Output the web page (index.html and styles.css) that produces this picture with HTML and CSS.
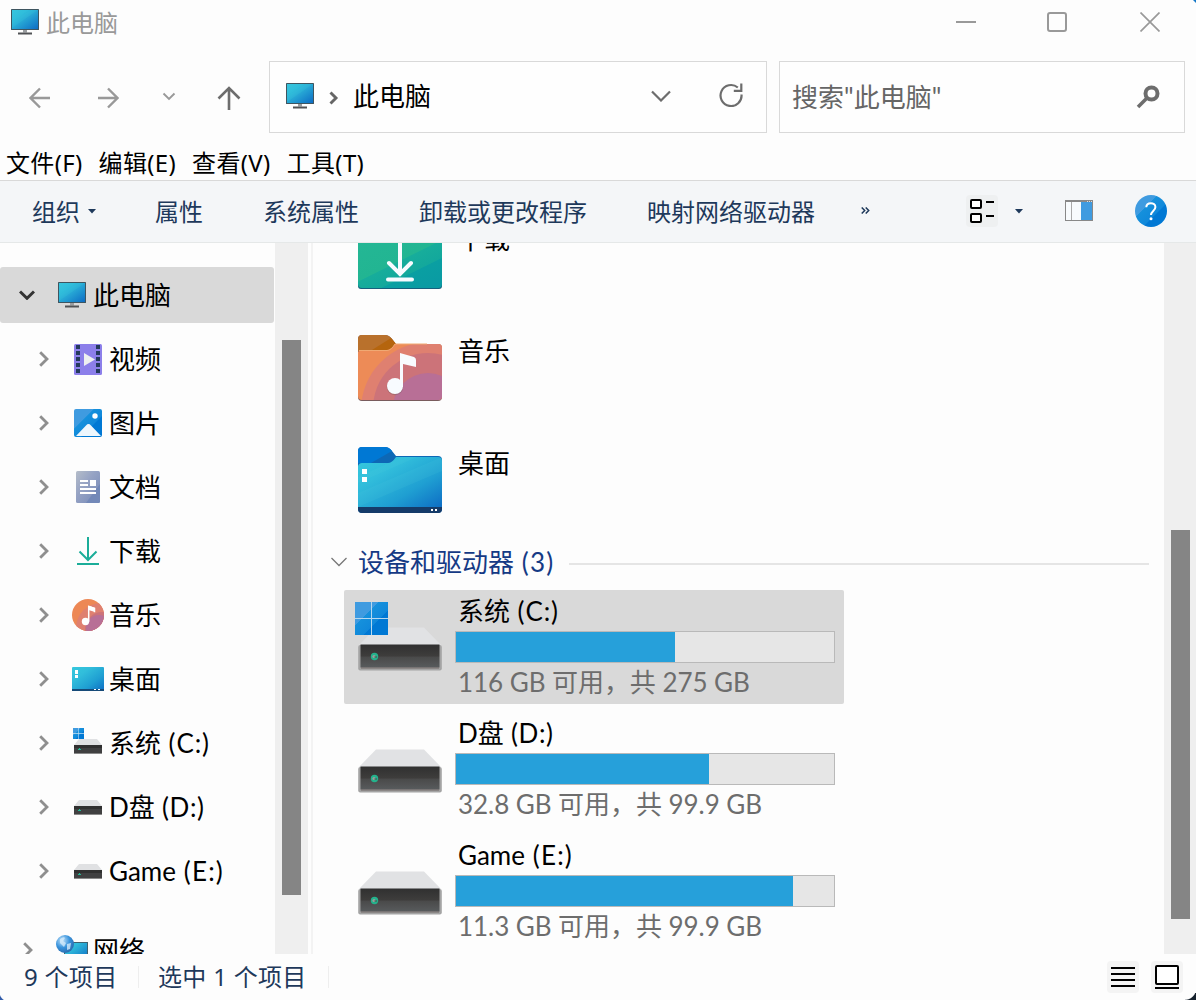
FILE: index.html
```
<!DOCTYPE html>
<html lang="zh-CN">
<head>
<meta charset="utf-8">
<title>此电脑</title>
<link rel="stylesheet" href="styles.css">
</head>
<body>
<svg class="defs" width="0" height="0" aria-hidden="true">
  <defs>
    <linearGradient id="gScreen" x1="0" y1="0" x2="1" y2="1"><stop offset="0" stop-color="#37c6dd"/><stop offset=".3" stop-color="#30bddb"/><stop offset="1" stop-color="#0d6cc4"/></linearGradient>
    <linearGradient id="gBlue" x1="0" y1="0" x2="1" y2="1"><stop offset="0" stop-color="#3f9be0"/><stop offset=".35" stop-color="#3f9be0"/><stop offset=".36" stop-color="#1590dc"/><stop offset=".62" stop-color="#1088da"/><stop offset=".63" stop-color="#0078d4"/><stop offset="1" stop-color="#0078d4"/></linearGradient>
    <linearGradient id="gTeal" x1="0" y1="0" x2=".8" y2="1"><stop offset="0" stop-color="#24b795"/><stop offset=".53" stop-color="#22b592"/><stop offset=".54" stop-color="#17ad9b"/><stop offset=".74" stop-color="#13a89c"/><stop offset=".75" stop-color="#0a9fa2"/><stop offset="1" stop-color="#0a9ba3"/></linearGradient>
    <linearGradient id="gDesk" x1="0" y1="0" x2="1" y2="1"><stop offset="0" stop-color="#35c8dd"/><stop offset=".3" stop-color="#31bddb"/><stop offset=".65" stop-color="#1f9fd2"/><stop offset="1" stop-color="#0d6cc4"/></linearGradient>
    <linearGradient id="gFront" x1="0" y1="0" x2="0" y2="1"><stop offset="0" stop-color="#303030"/><stop offset=".5" stop-color="#3e3d3c"/><stop offset=".55" stop-color="#4a4a4a"/><stop offset="1" stop-color="#585b5d"/></linearGradient>
    <linearGradient id="gDoc" x1="0" y1="0" x2="1" y2="1"><stop offset="0" stop-color="#b5bdc9"/><stop offset=".4" stop-color="#96a3c4"/><stop offset="1" stop-color="#7488b7"/></linearGradient>
    <radialGradient id="gGlobe" cx=".35" cy=".3" r=".8"><stop offset="0" stop-color="#c3e4fb"/><stop offset=".5" stop-color="#3993dc"/><stop offset="1" stop-color="#2863a5"/></radialGradient>
  </defs>
  <symbol id="pc" viewBox="0 0 28 26">
    <rect width="28" height="21" rx=".6" fill="#3e5560"/><rect x="1" y="1" width="26" height="19" fill="url(#gScreen)"/>
    <path d="M1 13 20 1h7L1 19z" fill="#36c5dd" opacity=".25"/><path d="M12 21h4v2.500h-4z" fill="#9a9da0"/><path d="M7 23.500h14v2H7z" fill="#505255"/>
  </symbol>
  <symbol id="right" viewBox="0 0 12 18"><path d="M2.200 2.200 9 9l-6.800 6.800" fill="none" stroke="#8f8f8f" stroke-width="2.800"/></symbol>
  <symbol id="drive" viewBox="0 0 84 46">
    <path d="M18 1.500h48L83 19H1z" fill="#e1e2e4"/><rect x=".2" y="19" width="83.600" height="25.500" rx="2" fill="#a4a4a4"/>
    <rect x="2.500" y="18.500" width="79" height="23" fill="url(#gFront)"/><path d="M3 42h78" stroke="#736a68"/>
    <circle cx="16.500" cy="30.500" r="3.700" fill="#24b28c"/><circle cx="16" cy="30.500" r="1.600" fill="#9a9f9b"/><path d="M16.500 31h2.500" stroke="#37504a"/>
  </symbol>
  <symbol id="minidrive" viewBox="0 0 28 16">
    <path d="M5 0h18l5 6H0z" fill="#e0e1e3"/><path d="M0 6h28v9H0z" fill="#404041"/><path d="M0 6h28v3H0z" fill="#303030"/><path d="M0 14h28v1H0z" fill="#898989"/><path d="M4 10.500h3M5.500 9v1.500" stroke="#24b795" stroke-width="1"/>
  </symbol>
  <symbol id="windows" viewBox="0 0 33 33"><path d="M0 0h16v16H0zM17 0h16v16H17zM0 17h16v16H0zM17 17h16v16H17z" fill="url(#gBlue)"/><path d="M16.500 0v33M0 16.500h33" stroke="#b5d8ef"/></symbol>
</svg>

<div class="window">
  <header class="titlebar">
    <svg class="pc"><use href="#pc"/></svg><span class="title">此电脑</span>
    <div class="controls">
      <svg width="20" height="20"><path d="M0 10h20" stroke="#999" stroke-width="2"/></svg>
      <svg width="20" height="20"><rect x="1" y="1" width="18" height="18" rx="2" fill="none" stroke="#999" stroke-width="2"/></svg>
      <svg width="20" height="20"><path d="m.5.5 19 19m0-19-19 19" stroke="#999" stroke-width="1.700"/></svg>
    </div>
    <i class="corner-tr"></i>
  </header>

  <div class="navbar">
    <div class="arrows">
      <svg width="22" height="22"><path d="M21 11H2M11 1.500 1.500 11l9.500 9.500" fill="none" stroke="#999" stroke-width="2.400"/></svg>
      <svg width="22" height="22"><path d="M1 11h19M11 1.500 20.500 11 11 20.500" fill="none" stroke="#999" stroke-width="2.400"/></svg>
      <svg class="recent" width="14" height="10"><path d="m1.500 1.500 5.500 5.500L12.500 1.500" fill="none" stroke="#999" stroke-width="1.900"/></svg>
      <svg width="24" height="26"><path d="M12 25V3M1.500 13.500 12 3l10.500 10.500" fill="none" stroke="#6d6d6d" stroke-width="2.600"/></svg>
    </div>
    <div class="address">
      <svg class="pc"><use href="#pc"/></svg>
      <svg class="crumb" width="10" height="14"><path d="m1.500 1.500 5.500 5.500-5.500 5.500" fill="none" stroke="#666" stroke-width="2.900"/></svg>
      <span>此电脑</span>
      <svg class="drop" width="20" height="12"><path d="m1 1.500 9 9 9-9" fill="none" stroke="#6d6d6d" stroke-width="2.200"/></svg>
      <svg class="refresh" width="24" height="24"><path d="M18.800 4.500A10.500 10.500 0 1 0 22.500 11.500M22.300.5v7.300h-7.500" fill="none" stroke="#6d6d6d" stroke-width="2.200"/></svg>
    </div>
    <div class="search"><span>搜索"此电脑"</span>
      <svg width="24" height="24"><circle cx="15.500" cy="8.500" r="6" fill="none" stroke="#6d6d6d" stroke-width="4"/><path d="M11.500 12.500 2 22" stroke="#6d6d6d" stroke-width="3.500"/></svg>
    </div>
  </div>

  <nav class="menu"><span>文件(F)</span><span>编辑(E)</span><span>查看(V)</span><span>工具(T)</span></nav>

  <div class="toolbar">
    <span class="t1">组织<svg class="tri" width="8" height="5"><path d="M0 0h8L4 4.500z" fill="#1e395b"/></svg></span>
    <span class="t2">属性</span><span class="t3">系统属性</span><span class="t4">卸载或更改程序</span><span class="t5">映射网络驱动器</span>
    <svg class="more" width="9" height="7"><path d="m.7.500 3 3-3 3M4.700.500l3 3-3 3" fill="none" stroke="#1e395b" stroke-width="1.500"/></svg>
    <div class="view"><svg width="26" height="26"><rect x="2" y="2" width="10" height="8" rx="1" fill="#fff" stroke="#000" stroke-width="2"/><rect x="2" y="16" width="10" height="8" rx="1" fill="#fff" stroke="#000" stroke-width="2"/><path d="M17 4h8M17 18h8" stroke="#000" stroke-width="2"/></svg></div>
    <svg class="tri2" width="8" height="5"><path d="M0 0h8L4 4.500z" fill="#1e395b"/></svg>
    <svg class="pane" width="28" height="21"><rect x=".5" y=".5" width="27" height="20" fill="#f8fbfd" stroke="#888"/><path d="M0 1h28" stroke="#888" stroke-width="2"/><path d="M22 1.500h5" stroke="#ddd" stroke-dasharray="1 1"/><path d="M6.500 2v18" stroke="#aaa"/><path d="M16 2h11v18H16z" fill="#3f9be0"/></svg>
    <svg class="help" width="32" height="32"><circle cx="16" cy="16" r="16" fill="url(#gBlue)"/><path d="M11.300 12.200c.2-5.300 9-5.200 9.100-.3 0 4.200-4.400 3.800-4.400 8.200" fill="none" stroke="#fff" stroke-width="2"/><circle cx="16" cy="23.800" r="1.500" fill="#fff"/></svg>
  </div>

  <main class="body">
    <aside class="tree">
      <div class="row root"><svg class="open" width="16" height="10"><path d="m1 1.500 7 6.800L15 1.500" fill="none" stroke="#333" stroke-width="3"/></svg><span class="icon"><svg class="pc"><use href="#pc"/></svg></span><span>此电脑</span></div>
      <div class="row"><svg class="chev"><use href="#right"/></svg><span class="icon"><svg width="28" height="31"><rect width="28" height="31" rx="1.500" fill="#8c7fea"/><path d="M4 1v29M24 1v29" stroke="#243a5c" stroke-width="4" stroke-dasharray="4 2"/><path d="M10 9v13l11-6.500z" fill="#eef0f0"/></svg></span><span>视频</span></div>
      <div class="row"><svg class="chev"><use href="#right"/></svg><span class="icon"><svg width="28" height="28"><rect width="28" height="28" rx="2" fill="url(#gBlue)"/><path d="m2 27 10-10.500q2.500-2.800 5 0L27 27z" fill="#eef7fd"/><circle cx="21" cy="7" r="2.700" fill="#fff"/></svg></span><span>图片</span></div>
      <div class="row"><svg class="chev"><use href="#right"/></svg><span class="icon"><svg width="24" height="32"><rect width="24" height="32" rx="1.500" fill="url(#gDoc)"/><path d="M10 32 24 13v17q0 2-2 2z" fill="#7389b8"/><path d="M4 10h8M4 14h8M4 18h16M4 22h16" stroke="#fff" stroke-width="2"/><rect x="14" y="9" width="6" height="6" fill="#fff"/></svg></span><span>文档</span></div>
      <div class="row"><svg class="chev"><use href="#right"/></svg><span class="icon"><svg width="22" height="28"><path d="M11 0v23M2.500 14.500l8.500 8.500 8.500-8.500M0 27h22" fill="none" stroke="#1bad99" stroke-width="2"/></svg></span><span>下载</span></div>
      <div class="row"><svg class="chev"><use href="#right"/></svg><span class="icon"><svg width="32" height="32"><defs><clipPath id="disc"><circle cx="16" cy="16" r="16"/></clipPath></defs><g clip-path="url(#disc)"><path d="M0 0h32v32H0z" fill="#ed8855"/><circle cx="29" cy="29" r="25" fill="#df8070"/><circle cx="30" cy="30" r="17" fill="#cc7379"/><circle cx="27" cy="29" r="13" fill="#b86f96"/></g><circle cx="13.500" cy="22.500" r="3.700" fill="#fff"/><path d="M16.700 22.500V7.500l5.800 1.800v4" fill="none" stroke="#fff" stroke-width="1.500"/><path d="M16.500 6.500 23 9v4l-6.500-2z" fill="#fff"/></svg></span><span>音乐</span></div>
      <div class="row"><svg class="chev"><use href="#right"/></svg><span class="icon"><svg width="32" height="24"><rect width="32" height="24" rx="1" fill="url(#gDesk)"/><path d="M0 22h32v2H0z" fill="#164a78"/><path d="M3 3h3v4H3zM3 8h3v3H3zM22 22h2v1h-2zM26 22h2v1h-2z" fill="#fff"/></svg></span><span>桌面</span></div>
      <div class="row"><svg class="chev"><use href="#right"/></svg><span class="icon sys"><svg class="mini"><use href="#minidrive"/></svg><svg class="logo"><use href="#windows"/></svg></span><span>系统<span class="latin"> (C:)</span></span></div>
      <div class="row"><svg class="chev"><use href="#right"/></svg><span class="icon"><svg class="mini"><use href="#minidrive"/></svg></span><span>D盘<span class="latin d"> (D:)</span></span></div>
      <div class="row"><svg class="chev"><use href="#right"/></svg><span class="icon"><svg class="mini"><use href="#minidrive"/></svg></span><span>Game<span class="latin e"> (E:)</span></span></div>
      <div class="row network"><svg class="chev"><use href="#right"/></svg><span class="icon"><svg width="32" height="30"><path d="M8 7h24v19H8z" fill="#3e6270"/><path d="M9 8h22v17H9z" fill="url(#gScreen)"/><circle cx="9" cy="9" r="9" fill="url(#gGlobe)"/><path d="M4 4q4-3 5-1L7 6l3 2-2 4-4-4zM11 9l4-1-1 6-3 1z" fill="#d3eafa" opacity=".8"/></svg></span><span>网络</span></div>
    </aside>
    <div class="scroll left"><i></i></div>
    <div class="divider"></div>
    <section class="content">
      <div class="folder"><svg width="84" height="68"><path d="M3 0h24q4 0 7 3l4 6h43q3 0 3 3v52q0 3-3 3H3q-3 0-3-3V3q0-3 3-3z" fill="#17607d"/><path d="M0 14h84v48q0 4-4 4H4q-4 0-4-4z" fill="url(#gTeal)"/><path d="M42 21v31M31 41l11 11 11-11M30 57.500h24" fill="none" stroke="#f8fbff" stroke-width="4" stroke-linecap="round"/></svg><span>下载</span></div>
      <div class="folder"><svg width="84" height="68"><defs><clipPath id="mus"><path d="M0 18q1-2 4-2h25q4 0 8-6h43q4 0 4 4v48q0 4-4 4H4q-4 0-4-4z"/></clipPath></defs><path d="M4 1h23q4 0 7 4l4 5h42q4 0 4 4v49q0 4-4 4H4q-4 0-4-4V5q0-4 4-4z" fill="#795c5d"/><path d="M4 1h23q4 0 7 4l4 5q-3 7-8 7H0V5q0-4 4-4z" fill="#b9712c"/><path d="m14 16 19-12 5 6q-3 6-8 6z" fill="#b5650e"/><g clip-path="url(#mus)"><path d="M0 0h84v68H0z" fill="#ed8b57"/><circle cx="71" cy="76" r="68" fill="#df8070"/><circle cx="70" cy="74" r="55" fill="#cc7379"/><circle cx="70" cy="74" r="35" fill="#b86f96"/></g><path d="M1 16.500h28q4 0 8-6.500h32" fill="none" stroke="#f0a973" stroke-width="1"/><circle cx="37" cy="53" r="8.300" fill="#795c5d" opacity=".4"/><circle cx="37" cy="52" r="8" fill="#f8fbff"/><path d="M42 53V19l14 4q2 1 2 3v7l-13-3v23z" fill="#f8fbff"/></svg><span>音乐</span></div>
      <div class="folder"><svg width="84" height="68"><path d="M4 1h23q4 0 7 4l4 5h42q4 0 4 4v49q0 4-4 4H4q-4 0-4-4V5q0-4 4-4z" fill="#0d68b6"/><path d="M4 1h23q4 0 7 4L13 17H0V5q0-4 4-4z" fill="#0078d4"/><path d="M0 20q1-3 4-3h26q4 0 8-6h42q4 0 4 4v47H0z" fill="url(#gDesk)"/><path d="M0 47 84 11v14L0 61zM0 31 44 11h15L0 37z" fill="#56cee3" opacity=".13"/><path d="M0 61h84v2q0 4-4 4H4q-4 0-4-4z" fill="#153b69"/><path d="M4 23h5v5H4zM4 31h5v5H4zM73 63h2v2h-2zM77 63h2v2h-2z" fill="#fff"/></svg><span>桌面</span></div>
      <div class="group"><svg width="16" height="10"><path d="m.5 1 7.500 7.500L15.500 1" fill="none" stroke="#777" stroke-width="1.300"/></svg><h2>设备和驱动器<span class="latin e"> (3)</span></h2><i></i></div>
      <div class="drives">
        <div class="drive selected"><div class="disk"><svg class="big"><use href="#drive"/></svg><svg class="logo"><use href="#windows"/></svg></div><div class="info"><b>系统<span class="latin"> (C:)</span></b><div class="bar"><i style="width:57.900%"></i></div><small>116 GB 可用，共 275 GB</small></div></div>
        <div class="drive"><div class="disk"><svg class="big"><use href="#drive"/></svg></div><div class="info"><b>D盘<span class="latin d"> (D:)</span></b><div class="bar"><i style="width:66.900%"></i></div><small>32.8 GB 可用，共 99.9 GB</small></div></div>
        <div class="drive"><div class="disk"><svg class="big"><use href="#drive"/></svg></div><div class="info"><b>Game<span class="latin e"> (E:)</span></b><div class="bar"><i style="width:89.150%"></i></div><small>11.3 GB 可用，共 99.9 GB</small></div></div>
      </div>
    </section>
    <div class="scroll right"><i></i></div>
  </main>

  <footer class="status"><span class="count">9 个项目</span><span class="chosen">选中 1 个项目</span>
    <div class="modes">
      <div><svg width="24" height="24"><path d="M0 3h24M0 9h24M0 15h24M0 21h24" stroke="#000" stroke-width="2"/></svg></div>
      <div><svg width="24" height="24"><rect x="1" y="1" width="22" height="18" rx="1" fill="#fff" stroke="#000" stroke-width="2"/><path d="M0 23h24" stroke="#000" stroke-width="2"/></svg></div>
    </div>
    <i class="corner-bl"></i><i class="corner-br"></i>
  </footer>
</div>
</body>
</html>
```
FILE: styles.css
```
* { box-sizing: border-box; }
body { margin: 0; background: #fdfdfd; font: 26px/36px Lato, "Noto Sans CJK SC", sans-serif; color: #000; }
svg { display: block; flex: none; }
span { white-space: nowrap; }
.defs { position: absolute; }
.window { width: 1196px; height: 1000px; display: flex; flex-direction: column; overflow: hidden; position: relative; }
.pc { width: 28px; height: 26px; }
.latin { letter-spacing: .9px; }
.latin.d { letter-spacing: .6px; }
.latin.e { letter-spacing: 1.2px; }

.titlebar { height: 44px; display: flex; align-items: center; padding: 0 36px 0 11px; }
.title { font: 24px/36px "Noto Sans CJK SC", sans-serif; color: #999; margin: -1px 0 0 7px; }
.controls { margin-left: auto; display: flex; gap: 73px; }
.controls svg:first-child { margin-right: -2px; }
.corner-tr { position: absolute; right: 0; top: 0; width: 3px; height: 3px; background: #1478c8; clip-path: polygon(0 0, 100% 0, 100% 100%); }

.navbar { height: 89px; padding: 17px 11px 0 0; display: flex; }
.arrows { width: 269px; display: flex; align-items: center; padding: 2px 0 0 29px; }
.arrows svg:nth-child(2) { margin-left: 46px; }
.arrows .recent { margin: -3px 41px 0 43px; }
.address, .search { height: 72px; border: 1px solid #d9d9d9; display: flex; align-items: center; background: #fefefe; }
.address { width: 498px; padding: 0 23px 0 16px; }
.address .pc { margin-top: -2px; }
.address span { margin-top: -2px; }
.crumb { margin: 2px 14px 0 15px; }
.drop { margin: -3px 48px 0 auto; }
.refresh { margin-top: -4px; }
.search { width: 406px; margin-left: 12px; padding: 0 24px 0 12px; justify-content: space-between; color: #666; }

.menu { height: 47px; padding: 13px 0 0 6px; display: flex; gap: 16px; font: 24px/34px "Noto Sans", "Noto Sans CJK SC", sans-serif; letter-spacing: .35px; }
.toolbar { height: 63px; border-top: 1px solid #d9d9d9; border-bottom: 1px solid #e5e8e8; background: #f4f6f8; display: flex; align-items: center; padding: 0 29px 2px 32px; font: 24px/34px "Noto Sans CJK SC", sans-serif; color: #1e395b; }
.t1 { display: flex; align-items: center; width: 123px; }
.tri { margin: 2px 0 0 8px; }
.t2 { width: 108px; } .t3 { width: 156px; } .t4 { width: 228px; } .t5 { width: 214px; }
.view { width: 32px; height: 32px; border-radius: 4px; background: #eef0f1; margin-left: 96px; display: grid; place-items: center; }
.tri2 { margin: 2px 0 0 17px; }
.pane { margin-left: 42px; }
.help { margin-left: auto; }

.body { height: 711px; display: flex; overflow: hidden; }
.tree { width: 275px; padding-top: 24px; display: flex; flex-direction: column; gap: 8px; }
.row { height: 56px; flex: none; display: flex; align-items: center; padding-left: 38px; }
.row.root { width: 274px; background: #d9d9d9; border-radius: 3px; padding-left: 19px; }
.root .icon { margin-left: 21px; }
.chev { width: 12px; height: 18px; }
.icon { width: 32px; height: 32px; display: grid; place-items: center; margin: 0 5px 0 22px; }
.sys { position: relative; }
.mini { width: 28px; height: 16px; margin-top: 1px; }
.sys .mini { margin-top: 7px; }
.sys .logo { position: absolute; left: 1px; top: 1px; width: 11px; height: 11px; }
.network { margin-top: 15px; padding-left: 22px; }
.scroll { width: 33px; background: #efefef; flex: none; padding-left: 7px; }
.scroll i { display: block; width: 19px; background: #858585; }
.left i { height: 555px; margin-top: 97px; }
.right { margin-left: auto; width: 32px; }
.right i { height: 389px; margin-top: 287px; }
.divider { width: 2px; background: #f3f3f3; margin-left: 3px; }
.content { width: 836px; padding-left: 31px; }
.folder { height: 112px; padding-left: 14px; display: flex; gap: 16px; }
.folder:first-child { margin-top: -21px; }
.folder span { margin-top: -1px; }
.group { height: 34px; display: flex; align-items: center; margin: -13px 0 0 -13px; }
.group h2 { font-size: 26px; font-weight: 400; line-height: 34px; margin: 0 15px 0 11px; color: #153a85; white-space: nowrap; }
.group i { width: 580px; height: 2px; background: #e5e5e5; margin-top: 3px; }
.drives { display: grid; gap: 8px; margin-top: 11px; }
.drive { width: 500px; height: 114px; padding: 3px 9px 0 14px; display: flex; gap: 13px; border-radius: 2px; }
.selected { background: #d9d9d9; }
.disk { width: 84px; position: relative; padding-top: 33px; }
.big { width: 84px; height: 46px; }
.disk .logo { position: absolute; left: -3px; top: 9px; width: 33px; height: 33px; }
.info { width: 380px; }
.info b { display: block; font-weight: 400; height: 38px; line-height: 36px; padding-left: 3px; }
.bar { height: 32px; border: 1px solid #b9b9b9; background: #e6e6e6; }
.bar i { display: block; height: 30px; background: #26a0da; }
.info small { display: block; font-size: 26px; line-height: 36px; padding: 1px 0 0 3px; color: #6d6d6d; white-space: nowrap; letter-spacing: -.05px; }

.status { height: 46px; padding: 0 13px 0 24px; display: flex; align-items: center; font: 24px/34px "Noto Sans", "Noto Sans CJK SC", sans-serif; color: #1e395b; }
.status span { height: 22px; line-height: 22px; border-right: 1px solid #eee; letter-spacing: .3px; }
.count { width: 115px; } .chosen { width: 190px; padding-left: 19px; }
.modes { margin-left: auto; display: flex; gap: 12px; }
.modes div { width: 32px; height: 32px; border-radius: 4px; background: #f4f4f4; display: grid; place-items: center; }
.corner-bl, .corner-br { position: absolute; bottom: 0; width: 9px; height: 5px; }
.corner-bl { left: 0; background: radial-gradient(circle at 100% -60%, transparent 9px, #315ba9 10px); }
.corner-br { right: 0; width: 11px; height: 7px; background: radial-gradient(circle at 0 -60%, transparent 10.500px, #17222e 11.500px); }
```
